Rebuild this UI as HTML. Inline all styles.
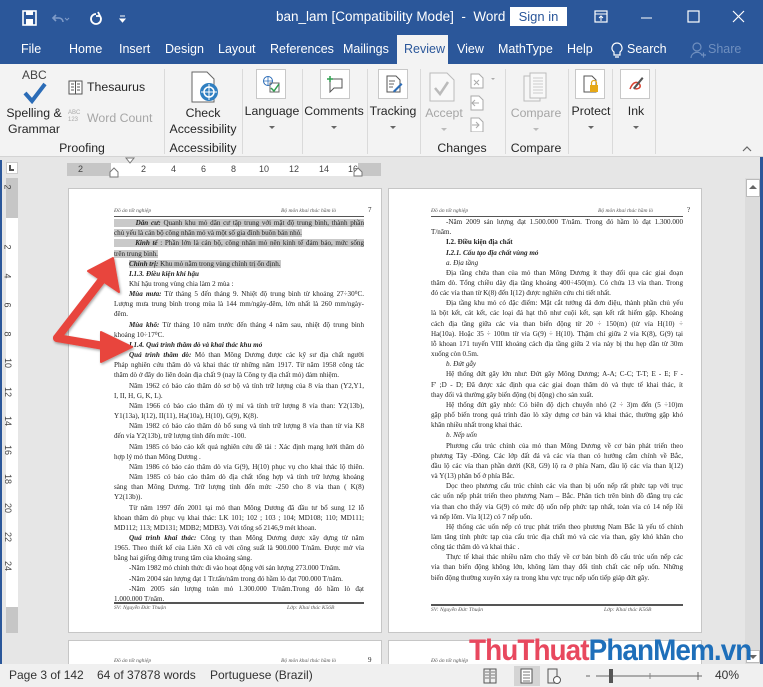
<!DOCTYPE html>
<html><head><meta charset="utf-8"><style>
*{margin:0;padding:0;box-sizing:border-box}
body{width:763px;height:687px;overflow:hidden;position:relative;font-family:"Liberation Sans","Noto Sans CJK SC",sans-serif;background:#e6e6e6}
.a{position:absolute;white-space:nowrap}
#title{left:0;top:0;width:763px;height:35px;background:#2b579a}
#tabs{left:0;top:35px;width:763px;height:29px;background:#2b579a}
.tab{position:absolute;top:42px;color:#fff;font-size:12.5px}
#ribbon{left:0;top:64px;width:763px;height:93px;background:#f3f3f3;border-bottom:1px solid #d4d4d4}
.rt{position:absolute;font-size:12.3px;color:#262626;text-align:center;white-space:nowrap;transform:translateX(-50%)}
.gr{color:#a6a6a6}
.sep{position:absolute;top:69px;width:1px;height:85px;background:#dadada}
.box{position:absolute;width:30px;height:30px;background:#fff;border:1px solid #c8c8c8}
.dd{position:absolute;width:0;height:0;border-left:3px solid transparent;border-right:3px solid transparent;border-top:3px solid #666;transform:translateX(-50%)}
.page{position:absolute;background:#fff;border:1px solid #c6c6c6;font-family:"Liberation Serif",serif;font-size:7.1px;color:#222}
.ln{position:absolute;white-space:nowrap;overflow:hidden;height:10px;line-height:10px;text-align:justify;text-align-last:justify}
.e{text-align-last:left}
.hl{background:#c9c9c9}
.bi{font-weight:bold;font-style:italic}
.it{font-style:italic}
.hd{position:absolute;font-style:italic;font-size:5.5px;color:#555}
#status{left:0;top:664px;width:763px;height:23px;background:#f0f0f0;font-size:12px;color:#333}
</style></head><body>

<div class="a" id="title"></div>
<svg class="a" style="left:20px;top:9px" width="110" height="18" viewBox="0 0 110 18">
<rect x="3" y="2" width="13" height="14" fill="none" stroke="#fff" stroke-width="1.6"/><rect x="6" y="2" width="7" height="4" fill="#fff"/><rect x="6" y="10" width="7" height="6" fill="#fff"/>
<path d="M36 6 l-3 3 l3 3 M33 9 h6 a4 4 0 0 1 4 4" fill="none" stroke="#7f9bc8" stroke-width="1.6"/>
<path d="M45 9 l2 2 l2 -2" fill="none" stroke="#7f9bc8" stroke-width="1"/>
<path d="M76 5 a5 5 0 1 0 4 2 M78 3 l2 4 l-4 0" fill="none" stroke="#fff" stroke-width="1.8"/>
<path d="M100 7 h5 M100 10 l2.5 3 l2.5 -3z" fill="#fff" stroke="#fff" stroke-width="1"/>
</svg>
<div class="a" style="left:276px;top:9px;color:#fff;font-size:13.5px">ban_lam [Compatibility Mode]&nbsp; - &nbsp;Word</div>
<div class="a" style="left:510px;top:7px;width:57px;height:19px;background:#fff;color:#2b579a;font-size:13px;text-align:center;line-height:19px">Sign in</div>
<svg class="a" style="left:592px;top:8px" width="165" height="18" viewBox="0 0 165 18">
<rect x="3" y="3" width="12" height="11" fill="none" stroke="#fff" stroke-width="1.2"/><path d="M3 6 h12 M9 13 v-5 M7 10 l2 -2 l2 2" stroke="#fff" fill="none"/>
<path d="M49 10 h11" stroke="#fff"/>
<rect x="96" y="3" width="11" height="11" fill="none" stroke="#fff" stroke-width="1.2"/>
<path d="M141 3 l11 11 M152 3 l-11 11" stroke="#fff" stroke-width="1.2"/>
</svg>

<div class="a" id="tabs"></div>
<div class="a" style="left:397px;top:35px;width:51px;height:29px;background:#f3f3f3"></div>
<div class="tab" style="left:21px">File</div>
<div class="tab" style="left:69px">Home</div>
<div class="tab" style="left:119px">Insert</div>
<div class="tab" style="left:165px">Design</div>
<div class="tab" style="left:218px">Layout</div>
<div class="tab" style="left:270px">References</div>
<div class="tab" style="left:343px">Mailings</div>
<div class="tab" style="left:404px;color:#2b579a">Review</div>
<div class="tab" style="left:457px">View</div>
<div class="tab" style="left:498px">MathType</div>
<div class="tab" style="left:567px">Help</div>
<svg class="a" style="left:610px;top:41px" width="14" height="18"><path d="M7 2 a5 5 0 0 0 -3 9 v3 h6 v-3 a5 5 0 0 0 -3 -9z M5 16 h4" fill="none" stroke="#fff" stroke-width="1.2"/></svg>
<div class="tab" style="left:627px">Search</div>
<svg class="a" style="left:690px;top:41px" width="16" height="18"><circle cx="7" cy="6" r="4" fill="none" stroke="#6f8fbf" stroke-width="1.2"/><path d="M1 17 a6 6 0 0 1 11 -3 M11 14 h5 M13.5 11.5 v5" fill="none" stroke="#6f8fbf" stroke-width="1.2"/></svg>
<div class="tab" style="left:708px;color:#6f8fbf">Share</div>

<div class="a" id="ribbon"></div>
<div class="a" style="left:22px;top:68px;font-size:12px;color:#444">ABC</div>
<svg class="a" style="left:22px;top:82px" width="26" height="22"><path d="M3 11 l7 8 l13 -17" fill="none" stroke="#2b6cb7" stroke-width="4"/></svg>
<div class="rt" style="left:34px;top:106px">Spelling &amp;</div>
<div class="rt" style="left:34px;top:122px">Grammar</div>
<svg class="a" style="left:68px;top:80px" width="15" height="15"><rect x="1" y="1" width="13" height="13" fill="#fff" stroke="#555"/><path d="M7.5 1 v13 M3 4h3 M3 7h3 M3 10h3 M9 4h3 M9 7h3 M9 10h3" stroke="#555"/></svg>
<div class="a" style="left:87px;top:80px;font-size:12.3px;color:#262626">Thesaurus</div>
<div class="a" style="left:68px;top:110px;font-size:6px;color:#aaa;line-height:7px">ABC<br>123</div>
<div class="a gr" style="left:87px;top:111px;font-size:12.3px">Word Count</div>
<div class="rt" style="left:82px;top:141px">Proofing</div>
<div class="sep" style="left:164px"></div>
<svg class="a" style="left:190px;top:71px" width="30" height="33"><path d="M2 1 h15 l7 7 v23 h-22z" fill="#fff" stroke="#666"/><circle cx="19" cy="21" r="9" fill="#2f7fc1"/><circle cx="19" cy="21" r="5" fill="none" stroke="#fff" stroke-width="1.5"/><path d="M19 13v16 M11 21h16" stroke="#fff" stroke-width="1"/></svg>
<div class="rt" style="left:203px;top:106px">Check</div>
<div class="rt" style="left:203px;top:122px">Accessibility</div>
<div class="rt" style="left:203px;top:141px">Accessibility</div>
<div class="sep" style="left:242px"></div>
<div class="box" style="left:256px;top:69px"></div>
<svg class="a" style="left:262px;top:75px" width="18" height="18"><circle cx="6" cy="6" r="4.5" fill="none" stroke="#2b6cb7"/><path d="M1.5 6h9 M6 1.5v9" stroke="#2b6cb7" stroke-width=".8"/><rect x="8" y="8" width="9" height="9" fill="none" stroke="#666"/><path d="M9 13 l3 3 l5 -7" stroke="#2e9e4f" stroke-width="1.5" fill="none"/></svg>
<div class="rt" style="left:272px;top:104px">Language</div>
<div class="dd" style="left:272px;top:126px"></div>
<div class="sep" style="left:302px"></div>
<div class="box" style="left:320px;top:69px"></div>
<svg class="a" style="left:326px;top:75px" width="18" height="18"><path d="M4 4 h12 v9 h-8 l-4 4 v-4 h0z" fill="none" stroke="#555"/><path d="M4 1v6 M1 4h6" stroke="#2e9e4f" stroke-width="1.5"/></svg>
<div class="rt" style="left:334px;top:104px">Comments</div>
<div class="dd" style="left:334px;top:126px"></div>
<div class="sep" style="left:367px"></div>
<div class="box" style="left:378px;top:69px"></div>
<svg class="a" style="left:385px;top:75px" width="18" height="18"><path d="M2 1h9l4 4v12h-13z" fill="#fff" stroke="#555"/><path d="M4 6h6 M4 9h5 M4 12h4" stroke="#666"/><path d="M8 16 l8 -8 l1.5 1.5 l-8 8z" fill="#2b6cb7"/></svg>
<div class="rt" style="left:393px;top:104px">Tracking</div>
<div class="dd" style="left:393px;top:126px"></div>
<div class="sep" style="left:420px"></div>
<svg class="a" style="left:428px;top:72px" width="28" height="30"><path d="M2 1h17l7 7v21h-24z" fill="#f8f8f8" stroke="#bbb"/><path d="M7 16 l5 6 l8 -12" stroke="#bbb" stroke-width="2.5" fill="none"/></svg>
<div class="rt gr" style="left:444px;top:106px">Accept</div>
<div class="dd" style="left:444px;top:128px;border-top-color:#bbb"></div>
<svg class="a" style="left:469px;top:72px" width="30" height="60"><path d="M2 2h8l4 4v10h-12z" fill="#fff" stroke="#aaa"/><path d="M5 8l5 5M10 8l-5 5" stroke="#aaa"/><path d="M22 6l2 2l2 -2z" fill="#aaa"/><path d="M2 24h8l4 4v10h-12z" fill="#fff" stroke="#aaa"/><path d="M10 31h-7M6 28l-3 3l3 3" stroke="#aaa" fill="none"/><path d="M2 46h8l4 4v10h-12z" fill="#fff" stroke="#aaa"/><path d="M3 53h7M7 50l3 3l-3 3" stroke="#aaa" fill="none"/></svg>
<div class="rt" style="left:462px;top:141px">Changes</div>
<div class="sep" style="left:505px"></div>
<svg class="a" style="left:523px;top:72px" width="30" height="30"><path d="M1 4h16v25h-16z" fill="#f6f6f6" stroke="#bbb"/><path d="M7 1h16v25h-16z" fill="#f8f8f8" stroke="#bbb"/><path d="M10 6h10M10 9h10M10 12h10M10 15h10M10 18h10M10 21h10" stroke="#ccc"/></svg>
<div class="rt gr" style="left:536px;top:106px">Compare</div>
<div class="dd" style="left:536px;top:128px;border-top-color:#bbb"></div>
<div class="rt" style="left:536px;top:141px">Compare</div>
<div class="sep" style="left:568px"></div>
<div class="box" style="left:575px;top:69px"></div>
<svg class="a" style="left:582px;top:75px" width="18" height="18"><path d="M2 1h8l4 4v12h-12z" fill="#fff" stroke="#555"/><rect x="8" y="10" width="8" height="7" fill="#e6a817"/><path d="M9.5 10v-2a2.5 2.5 0 0 1 5 0v2" fill="none" stroke="#e6a817" stroke-width="1.2"/></svg>
<div class="rt" style="left:591px;top:104px">Protect</div>
<div class="dd" style="left:591px;top:126px"></div>
<div class="sep" style="left:612px"></div>
<div class="box" style="left:620px;top:69px"></div>
<svg class="a" style="left:627px;top:75px" width="18" height="18"><path d="M3 14 c3 -8 8 -8 10 -4 c1 3 -3 5 -6 3" fill="none" stroke="#d9412f" stroke-width="1.5"/><path d="M6 13 l9 -11 l1.5 1.5 l-9 11z" fill="#555"/></svg>
<div class="rt" style="left:636px;top:104px">Ink</div>
<div class="dd" style="left:636px;top:126px"></div>
<div class="sep" style="left:655px"></div>
<svg class="a" style="left:742px;top:145px" width="10" height="8"><path d="M1 6l4 -4l4 4" fill="none" stroke="#666" stroke-width="1.2"/></svg>

<div class="a" style="left:6px;top:162px;width:12px;height:12px;background:#fff;border:1px solid #ccc"></div>
<div class="a" style="left:9px;top:165px;width:2px;height:6px;background:#555"></div>
<div class="a" style="left:9px;top:169px;width:5px;height:2px;background:#555"></div>
<div class="a" style="left:67px;top:163px;width:314px;height:13px;background:#c6c6c6"></div>
<div class="a" style="left:111px;top:163px;width:247px;height:13px;background:#fff;font-size:9px;color:#444;line-height:13px">
<span class="a" style="left:30px">2</span><span class="a" style="left:60px">4</span><span class="a" style="left:90px">6</span><span class="a" style="left:120px">8</span><span class="a" style="left:148px">10</span><span class="a" style="left:178px">12</span><span class="a" style="left:208px">14</span><span class="a" style="left:237px">16</span></div>
<div class="a" style="left:78px;top:163px;font-size:9px;color:#444;line-height:13px">2</div>
<svg class="a" style="left:104px;top:157px" width="260" height="22"><path d="M22 1h8l-4 5z" fill="#fff" stroke="#777"/><path d="M6 15l4 -4l4 4v5h-8z" fill="#fff" stroke="#777"/><path d="M250 15l4 -4l4 4v4h-8z" fill="#fff" stroke="#777"/></svg>
<div class="a" style="left:6px;top:178px;width:12px;height:455px;background:#c6c6c6"></div>
<div class="a" style="left:6px;top:218px;width:12px;height:389px;background:#fff"></div>
<div class="a" style="left:0;top:160px;width:2px;height:504px;background:#2b579a"></div>
<div class="a" style="left:760px;top:157px;width:3px;height:530px;background:#2b579a"></div>
<div class="a" style="left:5px;top:182px;font-size:9px;color:#444;transform:rotate(90deg)">2</div>
<div class="a" style="left:5px;top:242px;font-size:9px;color:#444">
<div style="position:absolute;top:0;transform:rotate(90deg)">2</div>
<div style="position:absolute;top:29px;transform:rotate(90deg)">4</div>
<div style="position:absolute;top:58px;transform:rotate(90deg)">6</div>
<div style="position:absolute;top:87px;transform:rotate(90deg)">8</div>
<div style="position:absolute;top:116px;left:-2px;transform:rotate(90deg)">10</div>
<div style="position:absolute;top:145px;left:-2px;transform:rotate(90deg)">12</div>
<div style="position:absolute;top:174px;left:-2px;transform:rotate(90deg)">14</div>
<div style="position:absolute;top:203px;left:-2px;transform:rotate(90deg)">16</div>
<div style="position:absolute;top:232px;left:-2px;transform:rotate(90deg)">18</div>
<div style="position:absolute;top:261px;left:-2px;transform:rotate(90deg)">20</div>
<div style="position:absolute;top:290px;left:-2px;transform:rotate(90deg)">22</div>
<div style="position:absolute;top:319px;left:-2px;transform:rotate(90deg)">24</div>
</div>

<div class="a" style="left:745px;top:178px;width:15px;height:486px;background:#dcdcdc"></div>
<div class="a" style="left:746px;top:179px;width:14px;height:18px;background:#fff;border:1px solid #bbb"></div>
<svg class="a" style="left:749px;top:184px" width="8" height="6"><path d="M0 5l4 -4l4 4z" fill="#666"/></svg>
<div class="a" style="left:746px;top:650px;width:14px;height:13px;background:#fff;border:1px solid #bbb"></div>
<svg class="a" style="left:749px;top:654px" width="8" height="6"><path d="M0 1l4 4l4 -4z" fill="#666"/></svg>

<div class="page" style="left:68px;top:188px;width:314px;height:445px">
<div class="hd" style="left:45px;top:19px">Đồ án tốt nghiệp</div>
<div class="hd" style="left:212px;top:19px">Bộ môn khai thác hầm lò</div>
<div class="a" style="left:299px;top:17px;font-size:7px">7</div>
<div class="a" style="left:45px;top:27px;width:250px;height:1px;background:#555"></div>
<div style="position:absolute;left:45px;top:29px;width:250px">
<div class="ln" style="top:0;left:0;width:250px"><span class="hl">&nbsp;&nbsp;&nbsp;&nbsp;&nbsp;&nbsp;&nbsp;&nbsp;<i><b>Dân cư:</b></i> Quanh khu mỏ dân cư tập trung với mật độ trung bình, thành phần</span></div>
<div class="ln e" style="top:10.16px;width:250px"><span class="hl">chủ yếu là cán bộ công nhân mỏ và một số gia đình buôn bán nhỏ.</span></div>
<div class="ln" style="top:20.3px;width:250px"><span class="hl">&nbsp;&nbsp;&nbsp;&nbsp;&nbsp;&nbsp;&nbsp;&nbsp;<i><b>Kinh tế</b></i> : Phần lớn là cán bộ, công nhân mỏ nên kinh tế đảm bảo, mức sống</span></div>
<div class="ln e" style="top:30.5px;width:250px"><span class="hl">trên trung bình.</span></div>
<div class="ln e" style="top:40.6px;width:250px;padding-left:15px"><span class="hl"><i><b>Chính trị:</b></i> Khu mỏ nằm trong vùng chính trị ổn định.</span></div>
<div class="ln e bi" style="top:50.8px;width:250px;padding-left:15px">I.1.3. Điều kiện khí hậu</div>
<div class="ln e" style="top:61px;width:250px;padding-left:15px">Khí hậu trong vùng chia làm 2 mùa :</div>
<div class="ln" style="top:71.1px;width:250px;padding-left:15px"><i><b>Mùa mưa:</b></i> Từ tháng 5 đến tháng 9. Nhiệt độ trung bình từ khoảng 27÷30⁰C.</div>
<div class="ln" style="top:81.3px;width:250px">Lượng mưa trung bình trong mùa là 144 mm/ngày-đêm, lớn nhất là 260 mm/ngày-</div>
<div class="ln e" style="top:91.4px;width:250px">đêm.</div>
<div class="ln" style="top:101.6px;width:250px;padding-left:15px"><i><b>Mùa khô:</b></i> Từ tháng 10 năm trước đến tháng 4 năm sau, nhiệt độ trung bình</div>
<div class="ln e" style="top:111.8px;width:250px">khoảng 10÷17⁰C.</div>
<div class="ln e bi" style="top:121.9px;width:250px;padding-left:15px">I.1.4. Quá trình thăm dò và khai thác khu mỏ</div>
<div class="ln" style="top:132px;width:250px;padding-left:15px"><i><b>Quá trình thăm dò:</b></i> Mỏ than Mông Dương được các kỹ sư địa chất người</div>
<div class="ln" style="top:142.2px;width:250px">Pháp nghiên cứu thăm dò và khai thác từ những năm 1917. Từ năm 1958 công tác</div>
<div class="ln e" style="top:152.4px;width:250px">thăm dò ở đây do liên đoàn địa chất 9 (nay là Công ty địa chất mỏ) đảm nhiệm.</div>
<div class="ln" style="top:162.6px;width:250px;padding-left:15px">Năm 1962 có báo cáo thăm dò sơ bộ và tính trữ lượng của 8 vỉa than (Y2,Y1,</div>
<div class="ln e" style="top:172.7px;width:250px">I, II, H, G, K, L).</div>
<div class="ln" style="top:182.9px;width:250px;padding-left:15px">Năm 1966 có báo cáo thăm dò tỷ mỉ và tính trữ lượng 8 vỉa than: Y2(13b),</div>
<div class="ln e" style="top:193px;width:250px">Y1(13a), I(12), II(11), Ha(10a), H(10), G(9), K(8).</div>
<div class="ln" style="top:203.2px;width:250px;padding-left:15px">Năm 1982 có báo cáo thăm dò bổ sung và tính trữ lượng 8 vỉa than từ vỉa K8</div>
<div class="ln e" style="top:213.4px;width:250px">đến vỉa Y2(13b), trữ lượng tính đến mức -100.</div>
<div class="ln" style="top:223.5px;width:250px;padding-left:15px">Năm 1985 có báo cáo kết quả nghiên cứu đề tài : Xác định mạng lưới thăm dò</div>
<div class="ln e" style="top:233.7px;width:250px">hợp lý mỏ than Mông Dương .</div>
<div class="ln" style="top:243.8px;width:250px;padding-left:15px">Năm 1986 có báo cáo thăm dò vỉa G(9), H(10) phục vụ cho khai thác lộ thiên.</div>
<div class="ln" style="top:254px;width:250px;padding-left:15px">Năm 1985 có báo cáo thăm dò địa chất tổng hợp và tính trữ lượng khoáng</div>
<div class="ln" style="top:264.2px;width:250px">sàng than Mông Dương. Trữ lượng tính đến mức -250 cho 8 vỉa than ( K(8)</div>
<div class="ln e" style="top:274.3px;width:250px">Y2(13b)).</div>
<div class="ln" style="top:284.5px;width:250px;padding-left:15px">Từ năm 1997 đến 2001 tại mỏ than Mông Dương đã đầu tư bổ sung 12 lỗ</div>
<div class="ln" style="top:294.6px;width:250px">khoan thăm dò phục vụ khai thác: LK 101; 102 ; 103 ; 104; MD108; 110; MD111;</div>
<div class="ln e" style="top:304.8px;width:250px">MD112; 113; MD131; MDB2; MDB3). Với tổng số 2146,9 mét khoan.</div>
<div class="ln" style="top:315px;width:250px;padding-left:15px"><i><b>Quá trình khai thác:</b></i> Công ty than Mông Dương được xây dựng từ năm</div>
<div class="ln" style="top:325.1px;width:250px">1965. Theo thiết kế của Liên Xô cũ với công suất là 900.000 T/năm. Được mở vỉa</div>
<div class="ln e" style="top:335.3px;width:250px">bằng hai giếng đứng trung tâm của khoáng sàng.</div>
<div class="ln e" style="top:345.4px;width:250px;padding-left:15px">-Năm 1982 mỏ chính thức đi vào hoạt động với sản lượng 273.000 T/năm.</div>
<div class="ln e" style="top:355.6px;width:250px;padding-left:15px">-Năm 2004 sản lượng đạt 1 Tr.tấn/năm trong đó hầm lò đạt 700.000 T/năm.</div>
<div class="ln" style="top:365.8px;width:250px;padding-left:15px">-Năm 2005 sản lượng toàn mỏ 1.300.000 T/năm.Trong đó hầm lò đạt</div>
<div class="ln e" style="top:375.9px;width:250px">1.000.000 T/năm.</div>
</div>
<div class="a" style="left:45px;top:413px;width:250px;height:2px;border-top:1px solid #555;border-bottom:1px solid #555"></div>
<div class="hd" style="left:45px;top:416px">SV: Nguyễn Đức Thuận</div>
<div class="hd" style="left:218px;top:416px">Lớp: Khai thác K56B</div>
</div>

<div class="page" style="left:388px;top:188px;width:314px;height:445px">
<div class="hd" style="left:42px;top:19px">Đồ án tốt nghiệp</div>
<div class="hd" style="left:209px;top:19px">Bộ môn khai thác hầm lò</div>
<div class="a" style="left:298px;top:17px;font-size:7px">?</div>
<div class="a" style="left:42px;top:27px;width:252px;height:1px;background:#555"></div>
<div style="position:absolute;left:42px;top:28px;width:252px">
<div class="ln" style="top:0;width:252px;padding-left:15px">-Năm 2009 sản lượng đạt 1.500.000 T/năm. Trong đó hầm lò đạt 1.300.000</div>
<div class="ln e" style="top:10.16px;width:252px">T/năm.</div>
<div class="ln e" style="top:20.3px;width:252px;padding-left:15px;font-weight:bold">I.2. Điều kiện địa chất</div>
<div class="ln e bi" style="top:30.5px;width:252px;padding-left:15px">I.2.1. Cấu tạo địa chất vùng mỏ</div>
<div class="ln e it" style="top:40.6px;width:252px;padding-left:15px">a. Địa tầng</div>
<div class="ln" style="top:50.8px;width:252px;padding-left:15px">Địa tầng chứa than của mỏ than Mông Dương ít thay đổi qua các giai đoạn</div>
<div class="ln" style="top:61px;width:252px">thăm dò. Tổng chiều dày địa tầng khoảng 400÷450(m). Có chứa 13 vỉa than. Trong</div>
<div class="ln e" style="top:71.1px;width:252px">đó các vỉa than từ K(8) đến I(12) được nghiên cứu chi tiết nhất.</div>
<div class="ln" style="top:81.3px;width:252px;padding-left:15px">Địa tầng khu mỏ có đặc điểm: Mặt cắt tướng đá đơn điệu, thành phần chủ yếu</div>
<div class="ln" style="top:91.4px;width:252px">là bột kết, cát kết, các loại đá hạt thô như cuội kết, sạn kết rất hiếm gặp. Khoảng</div>
<div class="ln" style="top:101.6px;width:252px">cách địa tầng giữa các vỉa than biến động từ 20 ÷ 150(m) (từ vỉa H(10) ÷</div>
<div class="ln" style="top:111.8px;width:252px">Ha(10a). Hoặc 35 ÷ 100m từ vỉa G(9) ÷ H(10). Thậm chí giữa 2 vỉa K(8), G(9) tại</div>
<div class="ln" style="top:121.9px;width:252px">lỗ khoan 171 tuyến VIII khoảng cách địa tầng giữa 2 vỉa này bị thu hẹp dần từ 30m</div>
<div class="ln e" style="top:132px;width:252px">xuống còn 0.5m.</div>
<div class="ln e it" style="top:142.2px;width:252px;padding-left:15px">b. Đứt gẫy</div>
<div class="ln" style="top:152.4px;width:252px;padding-left:15px">Hệ thống đứt gãy lớn như: Đứt gãy Mông Dương; A-A; C-C; T-T; E - E; F -</div>
<div class="ln" style="top:162.6px;width:252px">F' ;D - D; Đã được xác định qua các giai đoạn thăm dò và thực tế khai thác, ít</div>
<div class="ln e" style="top:172.7px;width:252px">thay đổi và thường gây biến động (bị động) cho sản xuất.</div>
<div class="ln" style="top:182.9px;width:252px;padding-left:15px">Hệ thống đứt gãy nhỏ: Có biên độ dịch chuyển nhỏ (2 ÷ 3)m đến (5 ÷10)m</div>
<div class="ln" style="top:193px;width:252px">gặp phổ biến trong quá trình đào lò xây dựng cơ bản và khai thác, thường gặp khó</div>
<div class="ln e" style="top:203.2px;width:252px">khăn nhiều nhất trong khai thác.</div>
<div class="ln e it" style="top:213.4px;width:252px;padding-left:15px">b. Nếp uốn</div>
<div class="ln" style="top:223.5px;width:252px;padding-left:15px">Phương cấu trúc chính của mỏ than Mông Dương về cơ bản phát triển theo</div>
<div class="ln" style="top:233.7px;width:252px">phương Tây -Đông. Các lớp đất đá và các vỉa than có hướng cắm chính về Bắc,</div>
<div class="ln" style="top:243.8px;width:252px">đầu lộ các vỉa than phần dưới (K8, G9) lộ ra ở phía Nam, đầu lộ các vỉa than I(12)</div>
<div class="ln e" style="top:254px;width:252px">và Y(13) phân bố ở phía Bắc.</div>
<div class="ln" style="top:264.2px;width:252px;padding-left:15px">Dọc theo phương cấu trúc chính các vỉa than bị uốn nếp rất phức tạp với trục</div>
<div class="ln" style="top:274.3px;width:252px">các uốn nếp phát triển theo phương Nam – Bắc. Phân tích trên bình đồ đẳng trụ các</div>
<div class="ln" style="top:284.5px;width:252px">vỉa than cho thấy vỉa G(9) có mức độ uốn nếp phức tạp nhất, toàn vỉa có 14 nếp lồi</div>
<div class="ln e" style="top:294.6px;width:252px">và nếp lõm. Vỉa I(12) có 7 nếp uốn.</div>
<div class="ln" style="top:304.8px;width:252px;padding-left:15px">Hệ thống các uốn nếp có trục phát triển theo phương Nam Bắc là yếu tố chính</div>
<div class="ln" style="top:315px;width:252px">làm tăng tính phức tạp của cấu trúc địa chất mỏ và các vỉa than, gây khó khăn cho</div>
<div class="ln e" style="top:325.1px;width:252px">công tác thăm dò và khai thác .</div>
<div class="ln" style="top:335.3px;width:252px;padding-left:15px">Thực tế khai thác nhiều năm cho thấy về cơ bản bình đồ cấu trúc uốn nếp các</div>
<div class="ln" style="top:345.4px;width:252px">vỉa than biến động không lớn, không làm thay đổi tính chất các nếp uốn. Những</div>
<div class="ln e" style="top:355.6px;width:252px">biến động thường xuyên xảy ra trong khu vực trục nếp uốn tiếp giáp đứt gãy.</div>
</div>
<div class="a" style="left:42px;top:415px;width:252px;height:2px;border-top:1px solid #555;border-bottom:1px solid #555"></div>
<div class="hd" style="left:42px;top:418px">SV: Nguyễn Đức Thuận</div>
<div class="hd" style="left:215px;top:418px">Lớp: Khai thác K56B</div>
</div>

<div class="page" style="left:68px;top:640px;width:314px;height:30px">
<div class="hd" style="left:45px;top:17px">Đồ án tốt nghiệp</div><div class="hd" style="left:212px;top:17px">Bộ môn khai thác hầm lò</div><div class="a" style="left:299px;top:15px;font-size:7px">9</div></div>
<div class="page" style="left:388px;top:640px;width:314px;height:30px">
<div class="hd" style="left:42px;top:17px">Đồ án tốt nghiệp</div></div>

<svg class="a" style="left:0;top:0" width="763" height="687">
<defs><filter id="sh" x="-20%" y="-20%" width="140%" height="140%"><feDropShadow dx="1" dy="1.5" stdDeviation="1.2" flood-opacity=".35"/></filter></defs>
<g fill="#e8453c" stroke="#e8453c" stroke-linejoin="round" filter="url(#sh)">
<path d="M57 338 L101 281" stroke-width="8" stroke-linecap="round" fill="none"/>
<path d="M113 258 L88 271 L119 292 Z" stroke-width="2"/>
<path d="M57 338 L104 346" stroke-width="8" stroke-linecap="round" fill="none"/>
<path d="M132 347 L101 332 L101 362 Z" stroke-width="2"/>
</g></svg>

<div class="a" style="left:469px;top:634px;font-size:30px;font-weight:bold;letter-spacing:-1px;transform:scaleX(.93);transform-origin:left top;font-family:'Liberation Sans Narrow','Liberation Sans',sans-serif"><span style="color:#e8485e">ThuThuat</span><span style="color:#1e6fba">PhanMem.vn</span></div>

<div class="a" id="status"></div>
<div class="a" style="left:9px;top:668px;font-size:12px;color:#333">Page 3 of 142</div>
<div class="a" style="left:97px;top:668px;font-size:12px;color:#333">64 of 37878 words</div>
<div class="a" style="left:210px;top:668px;font-size:12px;color:#333">Portuguese (Brazil)</div>
<svg class="a" style="left:480px;top:666px" width="240" height="20">
<path d="M4 3h6v14h-6zM10 3h6v14h-6z" fill="none" stroke="#555"/><path d="M5 6h4M5 9h4M5 12h4M11 6h4M11 9h4M11 12h4" stroke="#777"/>
<rect x="34" y="0" width="26" height="21" fill="#d4d4d4"/><rect x="41" y="3" width="11" height="14" fill="#fff" stroke="#555"/><path d="M43 6h7M43 9h7M43 12h7M43 15h7" stroke="#777"/>
<path d="M68 3h9v14h-9z" fill="none" stroke="#555"/><circle cx="77" cy="14" r="3.5" fill="#fff" stroke="#555"/>
<path d="M106 10h4 M116 10h102 M218 6v8 M214 10h8" stroke="#666"/><rect x="129" y="3" width="4" height="14" fill="#555"/><path d="M170 7v6" stroke="#888"/>
</svg>
<div class="a" style="left:715px;top:668px;font-size:12px;color:#333">40%</div>
</body></html>
